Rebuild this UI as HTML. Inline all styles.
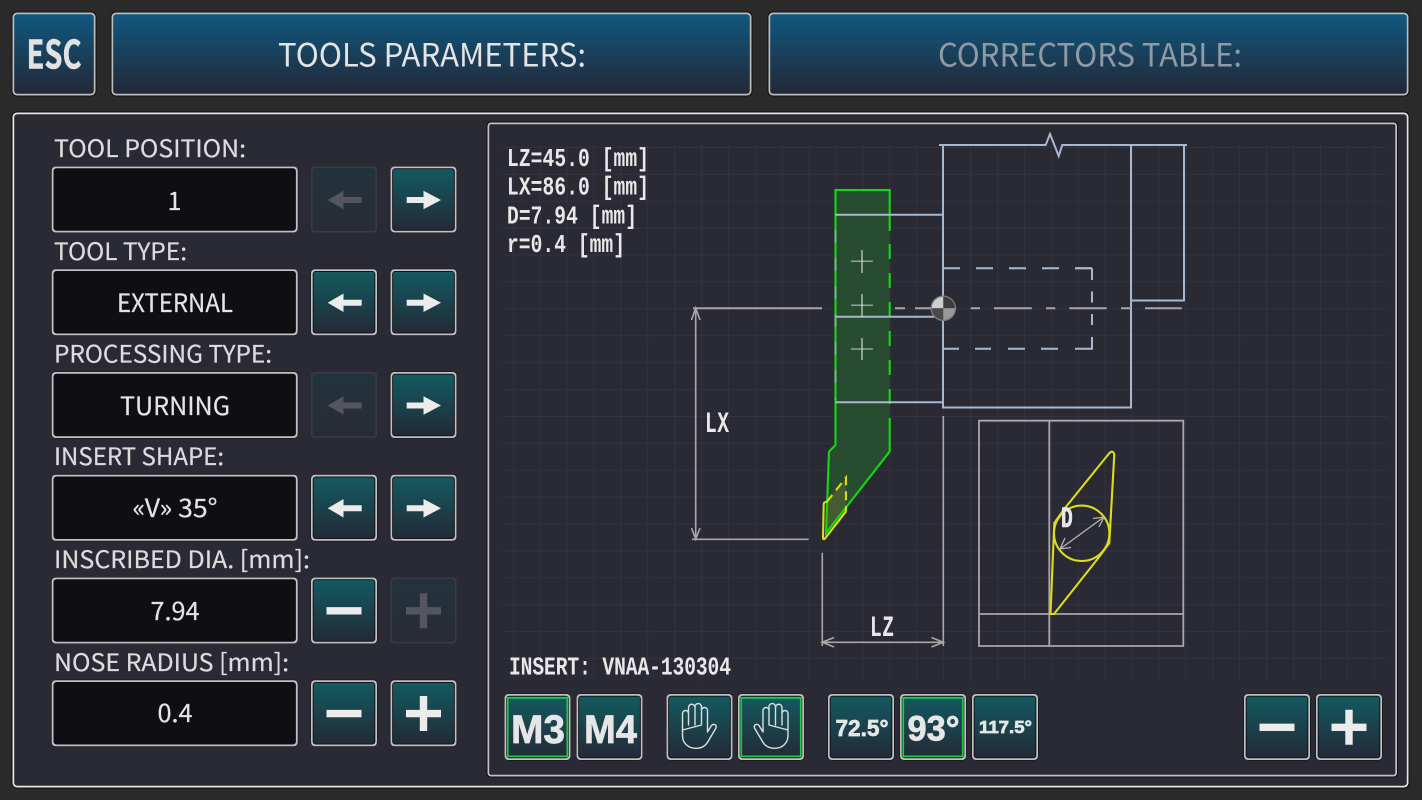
<!DOCTYPE html>
<html><head><meta charset="utf-8"><title>Tools Parameters</title>
<style>
html,body{margin:0;padding:0;background:#2a2a2a;width:1422px;height:800px;overflow:hidden}
svg{display:block}
.s{font-family:"Noto Sans CJK JP","Liberation Sans",sans-serif}
.lab{font-size:24px;fill:#dcdcdc;stroke:#dcdcdc;stroke-width:.2}
.val{font-size:25px;fill:#e4e4e4;text-anchor:middle;stroke:#e4e4e4;stroke-width:.2}
.b{font-family:"Liberation Sans",sans-serif;font-weight:bold;fill:#e6e6e6;stroke:#e6e6e6;stroke-width:.7}
.m{font-family:"Liberation Mono",monospace;font-weight:bold;font-size:19.6px;fill:#e8e8e8}
.lb{fill:none;stroke:#a9b8cf;stroke-width:2}
.dim{fill:none;stroke:#a8a8a8;stroke-width:1.6}
.y{fill:none;stroke:#dcdc1c;stroke-width:2.1}
.g{fill:none;stroke:#14d814;stroke-width:2.1}
.ic{fill:#ececec}
.hand{fill:none;stroke:#dedede;stroke-width:1.4;stroke-linejoin:round;stroke-linecap:round}
</style></head><body>
<svg width="1422" height="800" viewBox="0 0 1422 800" xmlns="http://www.w3.org/2000/svg">
<defs>
<linearGradient id="gh" x1="0" y1="0" x2="0" y2="1"><stop offset="0" stop-color="#10587f"/><stop offset="1" stop-color="#232838"/></linearGradient>
<linearGradient id="gb" x1="0" y1="0" x2="0" y2="1"><stop offset="0" stop-color="#135a60"/><stop offset="1" stop-color="#232a37"/></linearGradient>
<linearGradient id="gd" x1="0" y1="0" x2="0" y2="1"><stop offset="0" stop-color="#22333c"/><stop offset="1" stop-color="#292b36"/></linearGradient>
<pattern id="grid" x="513" y="147" width="26.9" height="26.9" patternUnits="userSpaceOnUse"><path d="M0 0H26.9M0 0V26.9" fill="none" stroke="#353543" stroke-width="1.4"/></pattern>
<g id="btn"><rect x="-.5" y="-.5" width="67" height="67" rx="5" fill="#0c0c12"/><rect x="0" y="0" width="66" height="66" rx="4" fill="#c2c2c2"/><rect x="1.7" y="1.7" width="62.6" height="62.6" rx="3" fill="#0c0c16"/><rect x="2.6" y="2.6" width="60.8" height="60.8" rx="2" fill="url(#gb)"/></g>
<g id="dis"><rect x="0" y="0" width="66" height="66" rx="4" fill="#3a3b46"/><rect x="1.5" y="1.5" width="63" height="63" rx="3" fill="url(#gd)"/></g>
<g id="fld"><rect x="-.5" y="-.5" width="247" height="67" rx="5" fill="#0c0c12"/><rect x="0" y="0" width="246" height="66" rx="4" fill="#c2c2c2"/><rect x="1.8" y="1.8" width="242.4" height="62.4" rx="3" fill="#0e0e13"/></g>
<path id="ra" d="M16.2 30.500H33V24.300L50.500 33.500 33 42.800V36.500H16.200Z"/>
<path id="la" d="M50.700 30.500H32.500V24.300L16.700 33.500 32.500 42.800V36.500H50.700Z"/>
<path id="mi" d="M15.500 29.600H50.500V37H15.500Z"/>
<path id="pl" d="M15.500 29.600H29.300V15.700H36.700V29.600H50.500V37H36.700V50.800H29.300V37H15.500Z"/>
<rect id="sel" x="3.200" y="3.800" width="59.600" height="58.600" fill="none" stroke="#1fc94a" stroke-width="1.800"/>
<path id="hand" d="M16 36V19.500a3 3 0 0 1 6 0V31M22 31V13.500a3.200 3.200 0 0 1 6.500 0V31M28.500 31V12.800a3.200 3.200 0 0 1 6.500 0V31M35 31V16.500a3 3 0 0 1 6 0V38L45 31.500c2.200-2.500 5.700-.4 4.400 2.600L41.500 47.500c-2.400 4.400-6.500 6.800-12 6.800C21.500 54.300 16 49 16 41.500V36Z"/>
</defs>

<rect width="1422" height="800" fill="#2a2a2a"/>

<!-- header -->
<rect x="11.500" y="11.500" width="85" height="85" rx="5" fill="#111"/>
<rect x="12.500" y="12.500" width="83" height="83" rx="4.500" fill="#bdbdbd"/>
<rect x="14.200" y="14.200" width="79.600" height="79.600" rx="3" fill="url(#gh)"/>
<rect x="110.500" y="11.500" width="642" height="85" rx="5" fill="#111"/>
<rect x="111.500" y="12.500" width="640" height="83" rx="4.500" fill="#bdbdbd"/>
<rect x="113.200" y="14.200" width="636.600" height="79.600" rx="3" fill="url(#gh)"/>
<rect x="767.500" y="11.500" width="642" height="85" rx="5" fill="#111"/>
<rect x="768.500" y="12.500" width="640" height="83" rx="4.500" fill="#bdbdbd"/>
<rect x="770.200" y="14.200" width="636.600" height="79.600" rx="3" fill="url(#gh)"/>
<text class="s" x="26.500" y="68.500" font-size="39" font-weight="700" fill="#e2e2e2" stroke="#e2e2e2" stroke-width=".5" textLength="55" lengthAdjust="spacingAndGlyphs">ESC</text>
<text class="s" x="278" y="66.500" font-size="32" fill="#e4e4e4" textLength="308" lengthAdjust="spacingAndGlyphs">TOOLS PARAMETERS:</text>
<text class="s" x="938" y="66.500" font-size="32" fill="#8f9aa3" textLength="304" lengthAdjust="spacingAndGlyphs">CORRECTORS TABLE:</text>

<!-- main panel -->
<rect x="11.500" y="111.500" width="1398" height="677" rx="5" fill="#0e0e12"/>
<rect x="12.500" y="112.500" width="1396" height="675" rx="4.500" fill="#e6e6e6"/>
<rect x="14.200" y="114.200" width="1392.600" height="671.600" rx="3" fill="#2a2a35"/>
<rect x="486.500" y="121.500" width="911.500" height="656" rx="4" fill="#0e0e12"/>
<rect x="487.500" y="122.500" width="909.500" height="654" rx="3.500" fill="#c4c4c4"/>
<rect x="489.200" y="124.200" width="906.100" height="650.600" rx="2" fill="#2a2a35"/>
<rect x="502" y="145" width="886" height="537" fill="url(#grid)"/>

<!-- left column -->
<text class="s lab" x="54" y="157" textLength="192" lengthAdjust="spacingAndGlyphs">TOOL POSITION:</text>
<text class="s lab" x="54" y="260" textLength="133" lengthAdjust="spacingAndGlyphs">TOOL TYPE:</text>
<text class="s lab" x="54" y="362.500" textLength="218" lengthAdjust="spacingAndGlyphs">PROCESSING TYPE:</text>
<text class="s lab" x="54" y="465" textLength="170" lengthAdjust="spacingAndGlyphs">INSERT SHAPE:</text>
<text class="s lab" x="54" y="568" textLength="256" lengthAdjust="spacingAndGlyphs">INSCRIBED DIA. [mm]:</text>
<text class="s lab" x="54" y="671" textLength="235" lengthAdjust="spacingAndGlyphs">NOSE RADIUS [mm]:</text>

<use href="#fld" x="51.700" y="166.500"/><use href="#fld" x="51.700" y="269.250"/><use href="#fld" x="51.700" y="372"/><use href="#fld" x="51.700" y="474.750"/><use href="#fld" x="51.700" y="577.500"/><use href="#fld" x="51.700" y="680.250"/>
<text class="s val" x="174.500" y="210">1</text>
<text class="s val" x="175" y="312" textLength="116" lengthAdjust="spacingAndGlyphs">EXTERNAL</text>
<text class="s val" x="175" y="415" textLength="110" lengthAdjust="spacingAndGlyphs">TURNING</text>
<text class="s val" x="175" y="517" textLength="85" lengthAdjust="spacingAndGlyphs">«V» 35°</text>
<text class="s val" x="175" y="620" textLength="49" lengthAdjust="spacingAndGlyphs">7.94</text>
<text class="s val" x="175" y="722" textLength="35" lengthAdjust="spacingAndGlyphs">0.4</text>

<use href="#dis" x="311" y="166.500"/><use href="#la" x="311" y="166.500" fill="#54555f"/>
<use href="#btn" x="390.500" y="166.500"/><use href="#ra" class="ic" x="390.500" y="166.500"/>
<use href="#btn" x="311" y="269.250"/><use href="#la" class="ic" x="311" y="269.250"/>
<use href="#btn" x="390.500" y="269.250"/><use href="#ra" class="ic" x="390.500" y="269.250"/>
<use href="#dis" x="311" y="372"/><use href="#la" x="311" y="372" fill="#54555f"/>
<use href="#btn" x="390.500" y="372"/><use href="#ra" class="ic" x="390.500" y="372"/>
<use href="#btn" x="311" y="474.750"/><use href="#la" class="ic" x="311" y="474.750"/>
<use href="#btn" x="390.500" y="474.750"/><use href="#ra" class="ic" x="390.500" y="474.750"/>
<use href="#btn" x="311" y="577.500"/><use href="#mi" class="ic" x="311" y="577.500"/>
<use href="#dis" x="390.500" y="577.500"/><use href="#pl" x="390.500" y="577.500" fill="#54555f"/>
<use href="#btn" x="311" y="680.250"/><use href="#mi" class="ic" x="311" y="680.250"/>
<use href="#btn" x="390.500" y="680.250"/><use href="#pl" class="ic" x="390.500" y="680.250"/>

<!-- readouts -->
<g transform="translate(507 165.800) scale(1 1.32)"><text class="m" x="0" y="0" textLength="142">LZ=45.0 [mm]</text></g>
<g transform="translate(507 194.300) scale(1 1.32)"><text class="m" x="0" y="0" textLength="142">LX=86.0 [mm]</text></g>
<g transform="translate(507 223.300) scale(1 1.32)"><text class="m" x="0" y="0" textLength="130">D=7.94 [mm]</text></g>
<g transform="translate(507 251.800) scale(1 1.32)"><text class="m" x="0" y="0" textLength="118">r=0.4 [mm]</text></g>
<g transform="translate(509 674.300) scale(1 1.32)"><text class="m" x="0" y="0" textLength="222">INSERT: VNAA-130304</text></g>

<!-- holder -->
<path d="M835.500 190H889.700V451.500L826 533L829 451.700L835.500 445Z" fill="#274c30"/>
<path d="M826.700 502L846 478V511.500L825 537Z" fill="#4f5f30" opacity=".8"/>
<path class="g" d="M889.700 231V190H835.500V445L829 451.700L826 533L889.700 451.500V430"/>
<path class="g" d="M889.700 244V430" stroke-dasharray="15 14"/>
<path d="M835.500 230V400" fill="none" stroke="#9aa8bd" stroke-width="1.600" stroke-dasharray="13 15"/>
<!-- workpiece -->
<path class="lb" d="M939 145H1045.700L1050 134L1058.700 156L1062.300 145H1187"/>
<path class="lb" d="M943 145V407.500H1131V145M1184 145V300.500H1131"/>
<path class="lb" d="M835.500 214.700H943M835.500 316.700H943M835.500 402.300H943"/>
<path class="lb" d="M943 268.300H1092V280" stroke-dasharray="17 16"/>
<path class="lb" d="M1092 268.300V280M1092 291.500V302.500M1092 314V325M1092 337V348.700H1075M1058 348.700H1041M1025 348.700H1008M991 348.700H975M959 348.700H943"/>
<path d="M1075 268.300H1092" class="lb"/>
<!-- center line -->
<path d="M693 308.300H822M895 308.300H905M915 308.300H933M970.700 308.300H980M994 308.300H1031.700M1046 308.300H1055.300M1069.300 308.300H1106.700M1121 308.300H1131M1145 308.300H1181.700" fill="none" stroke="#a6a6a6" stroke-width="2"/>
<!-- crosses -->
<path d="M851 261.300H873M851 305.300H873M851 349H873" stroke="#8fa58f" stroke-width="1.500" fill="none"/>
<path d="M862 250V273M862 294V317M862 338V360" stroke="#d0d8d0" stroke-width="1.200" fill="none"/>
<!-- ball -->
<circle cx="943.300" cy="308.300" r="12.800" fill="#7c7c7c"/>
<path d="M943.300 308.300V296.800A11.500 11.500 0 0 0 931.800 308.300Z" fill="#cfcfcf"/>
<path d="M943.300 308.300V296.800A11.500 11.500 0 0 1 954.800 308.300Z" fill="#3c3c3c"/>
<path d="M943.300 308.300V319.800A11.500 11.500 0 0 1 931.800 308.300Z" fill="#4a4a4a"/>
<path d="M943.300 308.300V319.800A11.500 11.500 0 0 0 954.800 308.300Z" fill="#999"/>
<!-- insert on tool -->
<path class="y" d="M846 511.500L825 538.500Q823 540 823 537.500L823.700 504Q824 502 826.700 501.700"/>
<path class="y" d="M826.700 502L846 477.500V511.500" stroke-dasharray="9 6"/>
<!-- dimensions -->
<path class="dim" d="M695.700 308V539M691.500 320L695.700 308L700 320M691.500 528L695.700 539L700 528M692 539.300H808.700"/>
<path class="dim" d="M822.300 552.700V646M943.300 416V646M822.300 642.300H943.300M834 637.500L822.300 642.300L834 647M931.500 637.500L943.300 642.300L931.500 647"/>
<g transform="translate(705 432) scale(1 1.500)"><text class="m" x="0" y="0" textLength="24">LX</text></g>
<g transform="translate(870 636) scale(1 1.500)"><text class="m" x="0" y="0" textLength="24">LZ</text></g>
<!-- insert box -->
<path d="M979 420.700H1183.300V646H979ZM1049.300 420.700V646M979 614H1183.300" fill="none" stroke="#a8a8a8" stroke-width="1.800"/>
<path class="y" d="M1050.500 614L1054.300 523L1065 508L1109 453.500Q1113 449.500 1114.300 454.500L1109.300 543L1098.300 558L1054 614Z" stroke-linejoin="round"/>
<circle class="y" cx="1081.700" cy="533.300" r="27.700"/>
<path d="M1060 549L1104 517M1065 538L1060 549L1071 547.500M1093 518.500L1104 517L1099 527" fill="none" stroke="#b4b4b4" stroke-width="1.300"/>
<g transform="translate(1061 527) scale(1 1.500)"><text class="m" x="0" y="0" textLength="11" stroke="#e8e8e8" stroke-width=".4">D</text></g>

<!-- bottom buttons -->
<use href="#btn" x="504.500" y="694"/><use href="#sel" x="504.500" y="694"/>
<text class="b" x="511" y="742.800" font-size="40" textLength="54" lengthAdjust="spacingAndGlyphs">M3</text>
<use href="#btn" x="576.500" y="694"/>
<text class="b" x="584" y="742.800" font-size="40" textLength="53" lengthAdjust="spacingAndGlyphs">M4</text>
<use href="#btn" x="666.500" y="694"/><use href="#hand" class="hand" x="666.500" y="694"/>
<use href="#btn" x="738" y="694"/><use href="#sel" x="738" y="694"/>
<g transform="translate(804 694) scale(-1 1)"><use href="#hand" class="hand"/></g>
<use href="#btn" x="828" y="694"/>
<text class="b" x="835.500" y="736" font-size="23" textLength="53" lengthAdjust="spacingAndGlyphs">72.5°</text>
<use href="#btn" x="900" y="694"/><use href="#sel" x="900" y="694"/>
<text class="b" x="907.500" y="740.500" font-size="35" textLength="52" lengthAdjust="spacingAndGlyphs">93°</text>
<use href="#btn" x="972" y="694"/>
<text class="b" x="979" y="733" font-size="17.500" textLength="53" lengthAdjust="spacingAndGlyphs">117.5°</text>
<use href="#btn" x="1244" y="694"/><use href="#mi" class="ic" x="1244" y="694"/>
<use href="#btn" x="1316" y="694"/><use href="#pl" class="ic" x="1316" y="694"/>
</svg>
</body></html>
